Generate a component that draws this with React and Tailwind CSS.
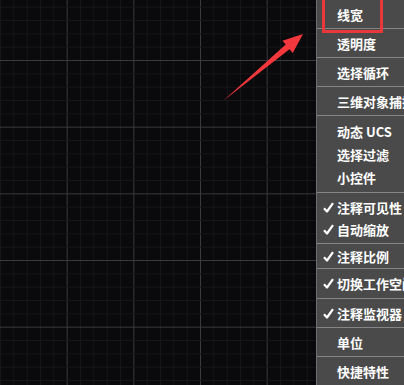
import React from 'react';

const font = { fontFamily: '"Noto Sans CJK SC", "Noto Sans", sans-serif' };

// canvas grid: minor every 13.33px, major every 5th
const step = 200 / 15;
const xs = Array.from({ length: 24 }, (_, i) => i * step);
const ys = Array.from({ length: 30 }, (_, i) => 6.67 + i * step);

function Grid() {
  return (
    <svg width="316" height="385" className="block">
      <rect width="316" height="385" fill="#0a0a0c" />
      {xs.map((x, i) => (
        <line key={'x' + i} x1={x + 0.5} y1="0" x2={x + 0.5} y2="385"
          stroke={i % 5 === 0 && i > 0 ? '#3a3a3f' : '#17171b'} strokeWidth="1" />
      ))}
      {ys.map((y, i) => (
        <line key={'y' + i} x1="0" y1={y + 0.5} x2="316" y2={y + 0.5}
          stroke={(i + 1) % 5 === 0 ? '#3a3a3f' : '#17171b'} strokeWidth="1" />
      ))}
    </svg>
  );
}

function Check() {
  return (
    <svg width="11" height="11" viewBox="0 0 11 11" className="block">
      <path d="M1 6.2 L4 9.5 L10 1.2" fill="none" stroke="#ffffff" strokeWidth="2.2" strokeLinejoin="round" />
    </svg>
  );
}

function Item({ label, checked, h }) {
  return (
    <div className={`flex items-center whitespace-nowrap ${h}`}>
      <div className="w-[20px] pl-[6px] shrink-0">{checked && <Check />}</div>
      <span className="text-[13px] font-bold text-white leading-none">{label}</span>
    </div>
  );
}

export default function App() {
  return (
    <div className="flex w-[404px] h-[385px] overflow-hidden bg-black" style={font}>
      <div className="relative w-[316px] h-full shrink-0">
        <Grid />
        <svg className="absolute left-0 top-0" width="316" height="385">
          <polygon
            points="223,101 285.7,44.6 282.4,40.7 303,34 292.8,53.1 289.5,49.2"
            fill="#f2383d"
          />
        </svg>
      </div>

      <div className="flex-1 h-full bg-[#4a4a4a] border-l border-[#6e6e6e] overflow-hidden">
        <div className="relative border-b border-[#858585]">
          <Item label="线宽" h="h-[28px]" />
          <div className="absolute left-[5px] top-[-3px] w-[61px] h-[36px] border-[3px] border-[#e8383b]" />
        </div>
        <div className="border-b border-[#858585]">
          <Item label="透明度" h="h-[28px]" />
        </div>
        <div className="border-b border-[#858585]">
          <Item label="选择循环" h="h-[28px]" />
        </div>
        <div className="border-b border-[#858585]">
          <Item label="三维对象捕捉" h="h-[28px]" />
        </div>
        <div className="border-b border-[#858585] py-[4px]">
          <Item label="动态 UCS" h="h-[23px]" />
          <Item label="选择过滤" h="h-[23px]" />
          <Item label="小控件" h="h-[22px]" />
        </div>
        <div className="border-b border-[#858585] py-[3px]">
          <Item label="注释可见性" checked h="h-[22px]" />
          <Item label="自动缩放" checked h="h-[22px]" />
        </div>
        <div className="border-b border-[#858585]">
          <Item label="注释比例" checked h="h-[24px]" />
        </div>
        <div className="border-b border-[#858585]">
          <Item label="切换工作空间" checked h="h-[29px]" />
        </div>
        <div className="border-b border-[#858585]">
          <Item label="注释监视器" checked h="h-[28px]" />
        </div>
        <div className="border-b border-[#858585]">
          <Item label="单位" h="h-[28px]" />
        </div>
        <div>
          <Item label="快捷特性" h="h-[28px]" />
        </div>
      </div>
    </div>
  );
}
